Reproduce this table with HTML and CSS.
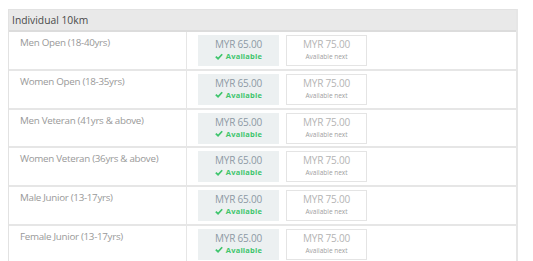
FILE: index.html
```html
<!DOCTYPE html>
<html>
<head>
<meta charset="utf-8">
<link rel="stylesheet" href="styles.css">
</head>
<body>
<div class="table">
  <div class="head">Individual 10km</div>
  <div class="row">
    <div class="label">Men Open (18-40yrs)</div>
    <div class="prices">
      <div class="box current"><div class="amt">MYR 65.00</div><div class="status"><svg class="check" viewBox="0 0 10 8"><path d="M1 4.2 L3.8 6.8 L9 1.2" /></svg>Available</div></div>
      <div class="box next"><div class="amt">MYR 75.00</div><div class="nexttxt">Available next</div></div>
    </div>
  </div>
  <div class="row">
    <div class="label">Women Open (18-35yrs)</div>
    <div class="prices">
      <div class="box current"><div class="amt">MYR 65.00</div><div class="status"><svg class="check" viewBox="0 0 10 8"><path d="M1 4.2 L3.8 6.8 L9 1.2" /></svg>Available</div></div>
      <div class="box next"><div class="amt">MYR 75.00</div><div class="nexttxt">Available next</div></div>
    </div>
  </div>
  <div class="row">
    <div class="label">Men Veteran (41yrs &amp; above)</div>
    <div class="prices">
      <div class="box current"><div class="amt">MYR 65.00</div><div class="status"><svg class="check" viewBox="0 0 10 8"><path d="M1 4.2 L3.8 6.8 L9 1.2" /></svg>Available</div></div>
      <div class="box next"><div class="amt">MYR 75.00</div><div class="nexttxt">Available next</div></div>
    </div>
  </div>
  <div class="row">
    <div class="label">Women Veteran (36yrs &amp; above)</div>
    <div class="prices">
      <div class="box current"><div class="amt">MYR 65.00</div><div class="status"><svg class="check" viewBox="0 0 10 8"><path d="M1 4.2 L3.8 6.8 L9 1.2" /></svg>Available</div></div>
      <div class="box next"><div class="amt">MYR 75.00</div><div class="nexttxt">Available next</div></div>
    </div>
  </div>
  <div class="row">
    <div class="label">Male Junior (13-17yrs)</div>
    <div class="prices">
      <div class="box current"><div class="amt">MYR 65.00</div><div class="status"><svg class="check" viewBox="0 0 10 8"><path d="M1 4.2 L3.8 6.8 L9 1.2" /></svg>Available</div></div>
      <div class="box next"><div class="amt">MYR 75.00</div><div class="nexttxt">Available next</div></div>
    </div>
  </div>
  <div class="row">
    <div class="label">Female Junior (13-17yrs)</div>
    <div class="prices">
      <div class="box current"><div class="amt">MYR 65.00</div><div class="status"><svg class="check" viewBox="0 0 10 8"><path d="M1 4.2 L3.8 6.8 L9 1.2" /></svg>Available</div></div>
      <div class="box next"><div class="amt">MYR 75.00</div><div class="nexttxt">Available next</div></div>
    </div>
  </div>
</div>
</body>
</html>
```
FILE: styles.css
```css
* { box-sizing: border-box; }
body {
  margin: 0;
  padding: 9px 0 0 8px;
  background: #fff;
  font-family: "Open Sans", sans-serif;
  overflow: hidden;
}
.table {
  width: 510px;
  border-left: 1px solid #e2e2e2;
  border-right: 2px solid #e6e6e6;
  border-top: 1px solid #e2e2e2;
}
.head {
  height: 22px;
  background: #e9e9e9;
  border-bottom: 2px solid #dcdcdc;
  font-size: 10.3px;
  color: #4a4a4a;
  line-height: 20px;
  padding-left: 3px;
}
.row {
  display: flex;
  height: 38.8px;
  border-bottom: 2px solid #e6e6e6;
}
.label {
  width: 178px;
  border-right: 1px solid #e6e6e6;
  padding: 4px 0 0 11px;
  font-size: 9.8px;
  letter-spacing: -0.3px;
  color: #999;
  line-height: 14px;
}
.prices {
  display: flex;
  gap: 7px;
  padding: 3px 0 0 11px;
}
.box {
  width: 81px;
  height: 31px;
  text-align: center;
  padding-top: 2px;
}
.current { background: #ecf0f1; }
.next { border: 1px solid #e4e4e4; padding-top: 1px; }
.amt {
  font-size: 10px;
  letter-spacing: -0.2px;
  line-height: 14px;
  color: #8d99a4;
}
.next .amt { color: #b4b4b4; }
.status {
  font-size: 7.5px;
  font-weight: bold;
  color: #3fc56d;
  line-height: 11px;
  letter-spacing: 0.2px;
}
.check {
  width: 8px;
  height: 7px;
  margin-right: 3px;
  vertical-align: -0.5px;
}
.check path {
  fill: none;
  stroke: #3fc56d;
  stroke-width: 2.2;
}
.nexttxt {
  font-size: 6.5px;
  color: #a0a0a0;
  line-height: 11px;
}
```
